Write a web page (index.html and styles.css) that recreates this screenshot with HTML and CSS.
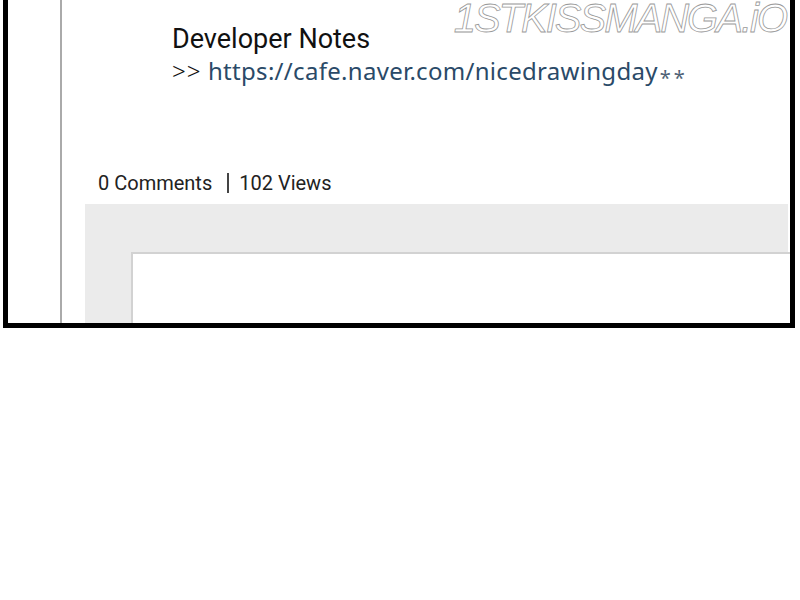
FILE: index.html
```html
<!DOCTYPE html>
<html lang="en">
<head>
    <meta charset="UTF-8">
    <meta name="viewport" content="width=device-width, initial-scale=1.0">
    <title>Developer Notes</title>
    <link rel="stylesheet" href="styles.css">
</head>
<body>
    <div class="frame">
        <div class="gutter"></div>
        <div class="content">
            <div class="notes">
                <h1 class="notes-title">Developer Notes</h1>
                <p class="notes-link"><span class="arrows">&gt;&gt;</span> <a href="#">https://cafe.naver.com/nicedrawingday</a><span class="stars">**</span></p>
            </div>
            <div class="stats">
                <span>0 Comments</span>
                <span class="sep"></span>
                <span>102 Views</span>
            </div>
            <div class="comment-panel">
                <div class="comment-box"></div>
            </div>
        </div>
        <div class="watermark">1STKISSMANGA.iO</div>
    </div>
</body>
</html>
```

FILE: styles.css
```css
body {
    margin: 0;
    background: #fff;
    font-family: Roboto, "Noto Sans", sans-serif;
    color: #1a1a1a;
}
.frame {
    position: relative;
    box-sizing: border-box;
    margin-left: 3px;
    width: 792px;
    height: 328px;
    border: 5px solid #000;
    border-top: 0;
    display: flex;
    overflow: hidden;
}
.gutter {
    width: 52px;
    border-right: 2px solid #aaa;
}
.content {
    flex: 1;
    display: flex;
    flex-direction: column;
}
.notes {
    padding: 23px 0 0 110px;
}
.notes-title {
    margin: 0;
    font-size: 27px;
    font-weight: 400;
    line-height: 32px;
    color: #111;
}
.notes-link {
    margin: 0;
    font-family: "Noto Sans", sans-serif;
    font-size: 24px;
    line-height: 32px;
    letter-spacing: 0.3px;
}
.arrows {
    color: #111;
    font-weight: 300;
    letter-spacing: 1px;
}
.notes-link a {
    color: #2a4a68;
    text-decoration: none;
}
.stars {
    color: #4f6276;
    font-size: 20px;
    letter-spacing: 3px;
    margin-left: 2px;
    vertical-align: -5px;
}
.stats {
    margin-top: 77px;
    padding-left: 36px;
    display: flex;
    align-items: center;
    font-size: 20px;
    line-height: 24px;
    color: #222;
}
.sep {
    width: 2px;
    height: 20px;
    background: #444;
    margin: 0 10px 0 15px;
}
.comment-panel {
    flex: 1;
    margin: 9px 2px 0 23px;
    padding: 48px 0 0 46px;
    background: #ebebeb;
    display: flex;
}
.comment-box {
    flex: 1;
    background: #fff;
    border-top: 2px solid #d2d2d2;
    border-left: 2px solid #d2d2d2;
    margin-right: -2px;
}
.watermark {
    position: absolute;
    top: 1px;
    right: 4px;
    font-family: "Liberation Sans", sans-serif;
    font-style: italic;
    font-size: 40px;
    line-height: 34px;
    letter-spacing: -2px;
    color: #fff;
    -webkit-text-stroke: 0.8px #999;
}
```
